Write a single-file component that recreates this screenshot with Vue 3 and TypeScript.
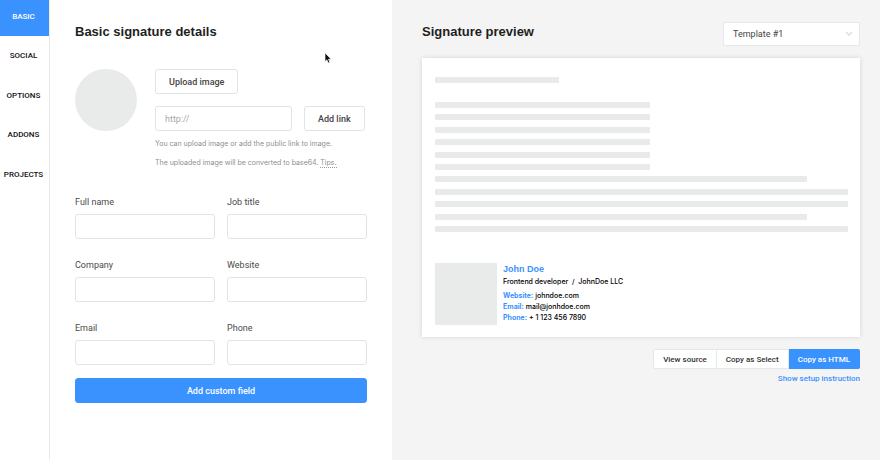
<script setup lang="ts">
import { ref } from 'vue'

interface Field {
  id: string
  label: string
}

const tabs: string[] = ['Basic', 'Social', 'Options', 'Addons', 'Projects']
const activeTab = ref<string>('Basic')

const fields: Field[] = [
  { id: 'full-name', label: 'Full name' },
  { id: 'job-title', label: 'Job title' },
  { id: 'company', label: 'Company' },
  { id: 'website', label: 'Website' },
  { id: 'email', label: 'Email' },
  { id: 'phone', label: 'Phone' },
]
const values = ref<Record<string, string>>({})
const imageUrl = ref<string>('')
const template = ref<string>('Template #1')

// Widths of the placeholder text lines, in percent of the letter's width
const lineWidths: number[] = [52, 52, 52, 52, 52, 52, 90, 100, 100, 90, 100]

const contacts: { label: string; value: string }[] = [
  { label: 'Website:', value: 'johndoe.com' },
  { label: 'Email:', value: 'mail@jonhdoe.com' },
  { label: 'Phone:', value: '+ 1 123 456 7890' },
]
</script>

<template>
  <div class="app">
    <nav class="sidebar">
      <div class="tabs">
        <button
          v-for="tab in tabs"
          :key="tab"
          type="button"
          class="tab"
          :class="{ active: tab === activeTab }"
          @click="activeTab = tab"
        >
          {{ tab }}
        </button>
      </div>
    </nav>

    <main class="details">
      <h1 class="title">Basic signature details</h1>
      <section class="photo">
        <div class="avatar"></div>
        <div class="photo-form">
          <button type="button" class="btn">Upload image</button>
          <div class="link-row">
            <input v-model="imageUrl" class="input url" type="text" placeholder="http://" aria-label="Image link" />
            <button type="button" class="btn">Add link</button>
          </div>
          <p class="hint">You can upload image or add the public link to image.</p>
          <p class="hint">The uploaded image will be converted to base64. <a href="#tips" class="tips">Tips.</a></p>
        </div>
      </section>

      <form class="fields" @submit.prevent>
        <div v-for="field in fields" :key="field.id" class="field">
          <label :for="field.id">{{ field.label }}</label>
          <input :id="field.id" v-model="values[field.id]" class="input" type="text" />
        </div>
      </form>
      <button type="button" class="btn primary add-field">Add custom field</button>
    </main>

    <section class="preview">
      <header class="preview-head">
        <h2 class="title">Signature preview</h2>
        <div class="select-wrap">
          <select v-model="template" class="select" aria-label="Template">
            <option>Template #1</option>
            <option>Template #2</option>
          </select>
          <svg class="chevron" viewBox="0 0 8 6" aria-hidden="true">
            <path d="M1 1l3 3.2L7 1" fill="none" stroke="#d9dbdb" stroke-width="1.2" />
          </svg>
        </div>
      </header>

      <article class="letter">
        <div class="bar subject"></div>
        <div class="lines">
          <div v-for="(width, i) in lineWidths" :key="i" class="bar" :style="{ width: width + '%' }"></div>
        </div>
        <div class="signature">
          <div class="sig-photo"></div>
          <div class="sig-text">
            <p class="sig-name">John Doe</p>
            <p class="sig-job">Frontend developer&nbsp; /&nbsp; JohnDoe LLC</p>
            <p v-for="contact in contacts" :key="contact.label" class="sig-line">
              <b>{{ contact.label }}</b> {{ contact.value }}
            </p>
          </div>
        </div>
      </article>

      <div class="actions">
        <button type="button" class="action">View source</button>
        <button type="button" class="action">Copy as Select</button>
        <button type="button" class="action primary">Copy as HTML</button>
      </div>
      <a href="#setup" class="setup">Show setup instruction</a>
    </section>

    <svg class="cursor" viewBox="0 0 8 12" aria-hidden="true">
      <path d="M1 1v8.6l1.9-1.8 1.3 3.1 1.6-.7-1.3-3H7.2z" fill="#111" stroke="#fff" stroke-width=".6" />
    </svg>
  </div>
</template>

<style>
body {
  margin: 0;
  background: #f4f4f4;
}
</style>

<style scoped>
.app {
  position: relative;
  display: grid;
  grid-template-columns: 50px minmax(0, 342fr) minmax(0, 488fr);
  min-height: 100vh;
  background: #f4f4f4;
  color: #1e1f21;
  font-family: Roboto, "Liberation Sans", sans-serif;
  font-size: 9px;
}
.app,
.app * {
  box-sizing: border-box;
}
button,
input,
select {
  margin: 0;
  font-family: inherit;
}
button {
  cursor: pointer;
}
h1,
h2,
p {
  margin: 0;
}
.sidebar {
  background: #fff;
  border-right: 1px solid #e9eaea;
}
.tabs {
  display: flex;
  flex-direction: column;
  justify-content: space-between;
  height: 194px;
}
.tab {
  height: 36px;
  padding: 0 2px 4px 0;
  border: 0;
  background: none;
  color: #111;
  font-size: 8px;
  font-weight: 500;
  text-align: center;
  text-transform: uppercase;
}
.tab.active {
  background: #3a92ff;
  color: #fff;
}
.details {
  padding: 24px 25px;
  background: #fff;
}
.title {
  font-family: "Liberation Sans", Arial, sans-serif;
  font-size: 13px;
  line-height: 16px;
  font-weight: 700;
}
.photo {
  display: flex;
  gap: 18px;
  margin-top: 29px;
}
.avatar {
  flex: 0 0 62px;
  height: 62px;
  border-radius: 50%;
  background: #e9ebea;
}
.photo-form {
  flex: 1;
  min-width: 0;
}
.btn {
  height: 25px;
  padding: 0 13px;
  border: 1px solid #e2e3e3;
  border-radius: 3px;
  background: #fff;
  color: #444;
  font-size: 9px;
  font-weight: 500;
  white-space: nowrap;
}
.link-row {
  display: flex;
  gap: 12px;
  margin-top: 12px;
}
.input {
  width: 100%;
  height: 25px;
  padding: 0 9px;
  border: 1px solid #e2e3e3;
  border-radius: 3px;
  background: #fff;
  color: #444;
  font-size: 9px;
  outline: 0;
}
.url {
  flex: 0 0 137px;
}
.input::placeholder {
  color: #a9a9a9;
  opacity: 1;
}
.hint {
  margin-top: 7px;
  color: #8f8f8f;
  font-family: Inter, "Liberation Sans", sans-serif;
  font-size: 7px;
  line-height: 12px;
  white-space: nowrap;
}
.tips {
  border-bottom: 1px dotted #999;
  color: inherit;
  text-decoration: none;
}
.fields {
  display: grid;
  grid-template-columns: 1fr 1fr;
  gap: 20px 12px;
  margin-top: 27px;
}
.field label {
  display: block;
  margin-bottom: 6px;
  color: #4a4a4a;
  font-size: 9px;
  line-height: 12px;
}
.btn.primary {
  border-color: #3a92ff;
  background: #3a92ff;
  color: #fff;
}
.add-field {
  width: 100%;
  margin-top: 13px;
}
.preview {
  padding: 22px 20px 20px 30px;
}
.preview-head {
  display: flex;
  align-items: center;
  justify-content: space-between;
  height: 24px;
}
.preview-head .title {
  padding-bottom: 4px;
}
.select-wrap {
  position: relative;
  width: 137px;
}
.select {
  display: block;
  width: 100%;
  height: 24px;
  padding: 0 9px;
  border: 1px solid #e6e7e7;
  border-radius: 2px;
  background: #fff;
  color: #444;
  font-size: 9px;
  appearance: none;
}
.chevron {
  position: absolute;
  top: 9px;
  right: 7px;
  width: 8px;
  height: 6px;
}
.letter {
  margin-top: 12px;
  padding: 19px 12px 12px 13px;
  background: #fff;
  box-shadow: 0 0 5px rgba(0, 0, 0, 0.13);
}
.bar {
  height: 6px;
  border-radius: 1px;
  background: #e9ebea;
}
.subject {
  width: 30%;
}
.lines {
  display: flex;
  flex-direction: column;
  justify-content: space-between;
  height: 130px;
  margin-top: 19px;
}
.signature {
  display: flex;
  gap: 6px;
  margin-top: 31px;
}
.sig-photo {
  flex: 0 0 62px;
  height: 62px;
  background: #e9ebea;
}
.sig-text {
  color: #000;
  font-family: Inter, "Liberation Sans", sans-serif;
  font-size: 7px;
  font-weight: 500;
  line-height: 11px;
}
.sig-name {
  color: #3a92ff;
  font-family: "Liberation Sans", Arial, sans-serif;
  font-size: 9px;
  line-height: 13px;
  font-weight: 700;
}
.sig-job {
  margin-bottom: 3px;
}
.sig-line b {
  color: #3a92ff;
  font-weight: 700;
}
.actions {
  display: flex;
  justify-content: flex-end;
  margin-top: 12px;
}
.action {
  height: 20px;
  padding: 0 9px;
  border: 1px solid #e6e7e7;
  background: #fff;
  color: #333;
  font-size: 8px;
  font-weight: 500;
  white-space: nowrap;
}
.action + .action {
  border-left-width: 0;
}
.action:first-child {
  border-radius: 2px 0 0 2px;
}
.action.primary {
  border-color: #3a92ff;
  border-radius: 0 2px 2px 0;
  background: #3a92ff;
  color: #fff;
}
.setup {
  display: block;
  width: fit-content;
  margin: 4px 0 0 auto;
  color: #3a92ff;
  font-size: 8px;
  font-weight: 500;
  line-height: 12px;
  text-decoration: none;
}
.cursor {
  position: absolute;
  top: 52px;
  left: 324px;
  width: 8px;
  height: 12px;
}
</style>
